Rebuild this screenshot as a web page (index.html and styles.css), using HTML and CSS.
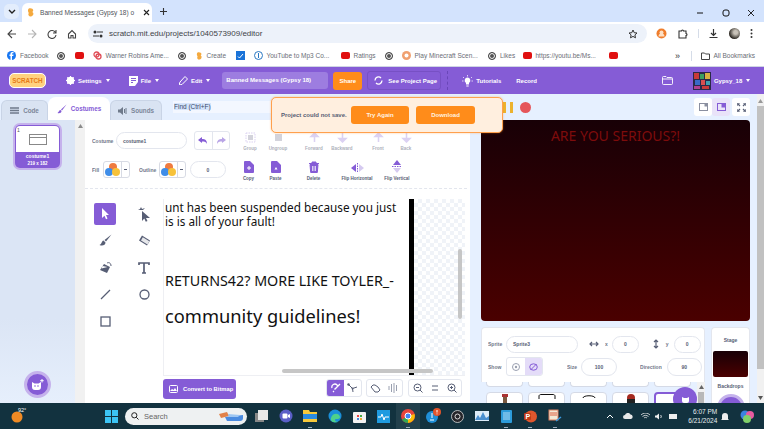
FILE: index.html
```html
<!DOCTYPE html>
<html lang="en">
<head>
<meta charset="utf-8">
<title>Banned Messages (Gypsy 18) on Scratch</title>
<link rel="stylesheet" href="styles.css">
</head>
<body>
<div class="tabstrip">
  <div class="tab-list"><svg width="8" height="6" viewBox="0 0 8 6"><path d="M1 1l3 3 3-3" fill="none" stroke="#222" stroke-width="1.400"/></svg></div>
  <div class="tab">
    <svg class="favicon" width="8" height="11" viewBox="0 0 9 11"><path d="M2 1c2-1 5 0 5 2 0 1-1 2-1 2s2 1 1 3c-1 2-4 3-5 1-1-1 0-3 0-3S0 3 2 1z" fill="#f4a93e"/></svg>
    <span class="tab-title">Banned Messages (Gypsy 18) o</span>
    <svg class="tab-close" width="7" height="7" viewBox="0 0 7 7"><path d="M1 1l5 5M6 1L1 6" stroke="#222" stroke-width="1.100"/></svg>
  </div>
  <svg class="new-tab" width="9" height="9" viewBox="0 0 9 9"><path d="M4.500 1v7M1 4.500h7" stroke="#333" stroke-width="1.100"/></svg>
  <div class="win-controls">
    <svg width="8" height="8" viewBox="0 0 8 8"><path d="M1 4h6" stroke="#111" stroke-width="1"/></svg>
    <svg width="8" height="8" viewBox="0 0 8 8"><rect x="1" y="1" width="6" height="6" rx="2" fill="none" stroke="#111"/></svg>
    <svg width="8" height="8" viewBox="0 0 8 8"><path d="M1 1l6 6M7 1l-6 6" stroke="#111" stroke-width=".9"/></svg>
  </div>
</div>

<div class="toolbar">
  <div class="nav-icons">
    <svg width="10" height="10" viewBox="0 0 10 10"><path d="M9 5H1.500M5 1L1 5l4 4" fill="none" stroke="#444" stroke-width="1.100"/></svg>
    <svg width="10" height="10" viewBox="0 0 10 10"><path d="M1 5h7.500M5 1l4 4-4 4" fill="none" stroke="#b5b5b5" stroke-width="1.100"/></svg>
    <svg width="10" height="10" viewBox="0 0 10 10"><path d="M8.500 3.500A4 4 0 1 0 9 6M9 1v3H6" fill="none" stroke="#444" stroke-width="1.100"/></svg>
    <svg width="10" height="10" viewBox="0 0 10 10"><path d="M1.500 5L5 1.500 8.500 5v4H6V6.500H4V9H1.500z" fill="none" stroke="#444" stroke-width="1.100"/></svg>
  </div>
  <div class="omnibox">
    <svg class="site-info" width="10" height="8" viewBox="0 0 10 8"><path d="M4 2h6M0 6h6" stroke="#333" stroke-width="1.200"/><circle cx="2" cy="2" r="1.500" fill="#333"/><circle cx="8" cy="6" r="1.500" fill="#333"/></svg>
    <span class="url">scratch.mit.edu/projects/1040573909/editor</span>
    <svg class="star" width="10" height="10" viewBox="0 0 10 10"><path d="M5 1l1.200 2.700 2.800.3-2.100 1.900.6 2.900L5 7.400 2.500 8.800l.6-2.900L1 4l2.800-.3z" fill="none" stroke="#333" stroke-width="1"/></svg>
  </div>
  <div class="ext-icons">
    <svg width="11" height="11" viewBox="0 0 11 11"><circle cx="5.500" cy="5.500" r="5" fill="#ef7d2c"/><circle cx="5.500" cy="4.500" r="2" fill="#fde0c5"/><path d="M2.500 8.500a3 3 0 0 1 6 0z" fill="#fde0c5"/></svg>
    <svg width="11" height="11" viewBox="0 0 11 11"><path d="M2 3h2.500a1 1 0 0 1 2 0H9v2.500a1 1 0 0 1 0 2V10H2z" fill="none" stroke="#333" stroke-width="1.100"/></svg>
    <i class="sep"></i>
    <svg width="11" height="11" viewBox="0 0 11 11"><path d="M5.500 1v6M3 5l2.500 2.500L8 5M1.500 9.500h8" fill="none" stroke="#333" stroke-width="1.200"/></svg>
    <span class="profile"></span>
    <svg width="3" height="11" viewBox="0 0 3 11"><circle cx="1.500" cy="2" r="1" fill="#333"/><circle cx="1.500" cy="5.500" r="1" fill="#333"/><circle cx="1.500" cy="9" r="1" fill="#333"/></svg>
  </div>
</div>

<div class="bookmarks">
  <span class="bm"><svg width="9" height="9" viewBox="0 0 9 9"><circle cx="4.500" cy="4.500" r="4.500" fill="#1877f2"/><path d="M5 9V5h1.300l.2-1.400H5V3c0-.5.200-.7.700-.7h.8V1H5.300C4 1 3.500 1.800 3.500 2.800v.8H2.500V5h1v4z" fill="#fff"/></svg>Facebook</span>
  <span class="bm"><span class="globe"></span></span>
  <span class="bm"><span class="yt"></span></span>
  <span class="bm"><svg width="9" height="9" viewBox="0 0 9 9"><circle cx="3.500" cy="3.500" r="2.500" fill="none" stroke="#e0505a" stroke-width="1.300"/><circle cx="5.500" cy="5.500" r="2.500" fill="none" stroke="#e0505a" stroke-width="1.300"/></svg>Warner Robins Ame...</span>
  <span class="bm"><span class="globe"></span></span>
  <span class="bm"><svg width="7" height="10" viewBox="0 0 9 11"><path d="M2 1c2-1 5 0 5 2 0 1-1 2-1 2s2 1 1 3c-1 2-4 3-5 1-1-1 0-3 0-3S0 3 2 1z" fill="#f4a93e"/></svg>Create</span>
  <span class="bm"><svg width="9" height="9" viewBox="0 0 9 9"><rect width="9" height="9" fill="#1a73d8"/><path d="M2 5.500l1.500 1.500L7 3" fill="none" stroke="#fff"/></svg></span>
  <span class="bm"><svg width="9" height="9" viewBox="0 0 9 9"><circle cx="4.500" cy="4.500" r="4" fill="none" stroke="#2b78c2"/><path d="M4.500 2v5" stroke="#2b78c2"/></svg>YouTube to Mp3 Co...</span>
  <span class="bm"><span class="yt"></span>Ratings</span>
  <span class="bm"><span class="globe"></span></span>
  <span class="bm"><svg width="9" height="9" viewBox="0 0 9 9"><circle cx="4.500" cy="4.500" r="4.500" fill="#f0a070"/><circle cx="4.500" cy="4.500" r="2" fill="#fff"/></svg>Play Minecraft Scen...</span>
  <span class="bm"><span class="globe"></span>Likes</span>
  <span class="bm"><span class="yt"></span>https://youtu.be/Ms...</span>
  <span class="bm"><span class="yt"></span></span>
  <span class="bm more">»</span>
  <i class="sep"></i>
  <span class="bm"><svg width="9" height="8" viewBox="0 0 9 8"><path d="M.5 1h3l1 1h4v5.500h-8z" fill="none" stroke="#444"/></svg>All Bookmarks</span>
</div>

<header class="menubar">
  <div class="logo">SCRATCH</div>
  <div class="menu m-settings">
    <svg width="9" height="9" viewBox="0 0 9 9"><circle cx="4.500" cy="4.500" r="2.800" fill="none" stroke="#fff" stroke-width="2"/><path d="M4.500 0v9M0 4.500h9M1.300 1.300l6.400 6.400M7.700 1.300L1.300 7.700" stroke="#fff" stroke-width="1.100"/></svg>
    <span>Settings</span><i class="caret"></i>
  </div>
  <div class="menu m-file">
    <svg width="9" height="10" viewBox="0 0 9 10"><path d="M0 0h9v6L6 10H0z" fill="#fff"/><path d="M2 2.500h5M2 4.500h5M2 6.500h2" stroke="#855cd6"/></svg>
    <span>File</span><i class="caret"></i>
  </div>
  <div class="menu m-edit">
    <svg width="9" height="9" viewBox="0 0 9 9"><path d="M0 9l1-3 5-5.500 2.500 2.500L3 8.500z" fill="none" stroke="#fff"/></svg>
    <span>Edit</span><i class="caret"></i>
  </div>
  <div class="project-title">Banned Messages (Gypsy 18)</div>
  <div class="share">Share</div>
  <div class="see-page">
    <svg width="9" height="9" viewBox="0 0 9 9"><path d="M1 4.500a3.500 3.500 0 0 1 6-2.500M8 4.500a3.500 3.500 0 0 1-6 2.500" fill="none" stroke="#fff" stroke-width="1.300"/></svg>
    <span>See Project Page</span>
  </div>
  <i class="menu-div"></i>
  <div class="menu m-tut">
    <svg width="11" height="12" viewBox="0 0 11 12"><path d="M5.500 2.500a3 3 0 0 0-1.500 5.500v1.500h3V8a3 3 0 0 0-1.500-5.500z" fill="#fff"/><path d="M5.500 0v1.500M1 2l1 1M10 2L9 3M0 6h1.500M9.500 6H11" stroke="#fff" stroke-width=".7"/><path d="M4.300 11h2.400" stroke="#fff"/></svg>
    <span>Tutorials</span>
  </div>
  <div class="menu m-rec"><span>Record</span></div>
  <svg class="m-folder" width="11" height="9" viewBox="0 0 11 9"><path d="M.5 1.500a1 1 0 0 1 1-1h2.500l1 1h4.500a1 1 0 0 1 1 1v5a1 1 0 0 1-1 1h-8a1 1 0 0 1-1-1z M.5 3h10" fill="none" stroke="#fff" stroke-width=".9"/></svg>
  <div class="user">
    <svg class="avatar" width="18" height="18" viewBox="0 0 18 18"><rect width="18" height="18" fill="#2a2a48"/><rect x="1" y="1" width="5" height="6" fill="#c83a3a"/><rect x="7" y="2" width="4" height="5" fill="#3aa060"/><rect x="12" y="1" width="5" height="6" fill="#d8b040"/><rect x="2" y="8" width="5" height="5" fill="#3a6ac8"/><rect x="8" y="8" width="4" height="5" fill="#d85050"/><rect x="13" y="9" width="4" height="4" fill="#40a0b0"/><rect x="1" y="14" width="6" height="3" fill="#b04090"/><rect x="9" y="14" width="7" height="3" fill="#c83a3a"/></svg>
    <span>Gypsy_18</span><i class="caret"></i>
  </div>
</header>

<main class="workspace">
  <section class="left-pane">
    <div class="tab-row">
      <div class="etab e-code"><svg width="9" height="7" viewBox="0 0 9 7"><path d="M0 1h9M0 3.500h9M0 6h9" stroke="#6f7a8a" stroke-width="1.300"/></svg>Code</div>
      <div class="etab e-costumes"><svg width="10" height="10" viewBox="0 0 10 10"><path d="M9.500 .5L4 5.500l1 1zM3.500 6C2 6 2 8 .5 9c2 .5 4 0 4-2z" fill="#855cd6"/></svg>Costumes</div>
      <div class="etab e-sounds"><svg width="9" height="8" viewBox="0 0 9 8"><path d="M0 2.500h2L5 0v8L2 5.500H0z" fill="#6f7a8a"/><path d="M6.500 2v4M8 1v6" stroke="#6f7a8a"/></svg>Sounds</div>
      <div class="find"><span>Find (Ctrl+F)</span></div>
    </div>
    <div class="editor-row">
      <aside class="selector">
        <div class="thumb-wrap">
          <div class="thumb">
            <div class="thumb-img"><span class="thumb-idx">1</span><span class="thumb-pic"></span></div>
            <div class="thumb-label"><b>costume1</b><small>219 x 182</small></div>
          </div>
        </div>
        <div class="add-costume">
          <svg width="13" height="12" viewBox="0 0 13 12"><path d="M1 3l2.500 1.500h4L10 3v5a3 3 0 0 1-3 3H4a3 3 0 0 1-3-3z" fill="#fff"/><circle cx="4" cy="7" r=".8" fill="#855cd6"/><circle cx="7" cy="7" r=".8" fill="#855cd6"/><path d="M11 0v3.500M9.200 1.700h3.500" stroke="#fff"/></svg>
        </div>
      </aside>
      <div class="sel-scroll"><svg width="5" height="4" viewBox="0 0 5 4"><path d="M2.500 0L5 4H0z" fill="#8a8a8a"/></svg></div>
      <div class="paint">
        <div class="p-row1">
          <span class="lbl l-costume">Costume</span>
          <span class="pill p-name">costume1</span>
          <span class="undo">
            <span><svg width="10" height="7" viewBox="0 0 10 7"><path d="M0 3l4-3v2c3 0 5 1 5 5-1-2-2-2.500-5-2.500V6z" fill="#855cd6"/></svg></span>
            <span><svg width="10" height="7" viewBox="0 0 10 7"><path d="M10 3L6 0v2C3 2 1 3 1 7c1-2 2-2.500 5-2.500V6z" fill="#b9a5e6"/></svg></span>
          </span>
          <div class="ops ops1">
            <span class="op"><svg width="11" height="11" viewBox="0 0 11 11"><rect x="1" y="1" width="9" height="9" fill="none" stroke="#b9a5e6" stroke-dasharray="1.500 1"/><rect x="3" y="3" width="5" height="5" fill="#a9a9b9"/></svg><em>Group</em></span>
            <span class="op"><svg width="11" height="11" viewBox="0 0 11 11"><rect x="2" y="2" width="7" height="7" fill="#a9a9b9"/></svg><em>Ungroup</em></span>
            <span class="op"><svg width="11" height="11" viewBox="0 0 11 11"><path d="M5.500 1v9M2 4.500L5.500 1 9 4.500z" fill="#b9a5e6" stroke="#b9a5e6" stroke-width="1.500"/></svg><em>Forward</em></span>
            <span class="op"><svg width="11" height="11" viewBox="0 0 11 11"><path d="M5.500 10V1M2 6.500L5.500 10 9 6.500z" fill="#b9a5e6" stroke="#b9a5e6" stroke-width="1.500"/></svg><em>Backward</em></span>
            <span class="op"><svg width="11" height="11" viewBox="0 0 11 11"><path d="M5.500 1v9M2 4.500L5.500 1 9 4.500z" fill="#b9a5e6" stroke="#b9a5e6" stroke-width="1.500"/></svg><em>Front</em></span>
            <span class="op"><svg width="11" height="11" viewBox="0 0 11 11"><path d="M5.500 10V1M2 6.500L5.500 10 9 6.500z" fill="#b9a5e6" stroke="#b9a5e6" stroke-width="1.500"/></svg><em>Back</em></span>
          </div>
        </div>
        <div class="p-row2">
          <span class="lbl l-fill">Fill</span>
          <span class="swatch"><span class="dots"><i></i><i></i><i></i></span><b></b></span>
          <span class="lbl l-outline">Outline</span>
          <span class="swatch"><span class="dots"><i></i><i></i><i></i></span><b></b></span>
          <span class="pill p-num">0</span>
          <div class="ops ops2">
            <span class="op"><svg width="10" height="12" viewBox="0 0 10 12"><path d="M0 1a1 1 0 0 1 1-1h5l4 4v7a1 1 0 0 1-1 1H1a1 1 0 0 1-1-1z" fill="#855cd6"/><path d="M3 7h4M5 5v4" stroke="#fff"/></svg><em>Copy</em></span>
            <span class="op"><svg width="10" height="12" viewBox="0 0 10 12"><path d="M0 1a1 1 0 0 1 1-1h5l4 4v7a1 1 0 0 1-1 1H1a1 1 0 0 1-1-1z" fill="#855cd6"/><path d="M3.500 8.500h3L5 6z" fill="#fff"/></svg><em>Paste</em></span>
            <span class="op"><svg width="10" height="12" viewBox="0 0 10 12"><path d="M0 2.500h10M3 2.500V1h4v1.500M1 3.500h8l-.7 8H1.700z" fill="#855cd6" stroke="#855cd6"/><path d="M3.500 5v5M5 5v5M6.500 5v5" stroke="#fff" stroke-width=".7"/></svg><em>Delete</em></span>
            <span class="op"><svg width="13" height="10" viewBox="0 0 13 10"><path d="M5 1v8L0 5z" fill="#855cd6"/><path d="M8 1v8l5-4z" fill="#d5caf0"/><path d="M6.500 0v10" stroke="#855cd6" stroke-dasharray="1.500 1"/></svg><em>Flip Horizontal</em></span>
            <span class="op"><svg width="10" height="13" viewBox="0 0 10 13"><path d="M1 5h8L5 0z" fill="#855cd6"/><path d="M1 8h8l-4 5z" fill="#d5caf0"/><path d="M0 6.500h10" stroke="#855cd6" stroke-dasharray="1.500 1"/></svg><em>Flip Vertical</em></span>
          </div>
        </div>
        <div class="p-body">
          <div class="tools">
            <span class="tool on"><svg width="9" height="13" viewBox="0 0 9 13"><path d="M1 1l7 7H5l1.500 3.500-1.500.7L3.500 8.700 1 11z" fill="#fff"/></svg></span>
            <span class="tool"><svg width="14" height="16" viewBox="0 0 14 16"><path d="M5 5l8 7H9l1.500 3-1.700.7L7.300 12.500 5 15z" fill="#575e75"/><path d="M3 3l1-2 1 2 3-1-2 2H1z" fill="#575e75"/></svg></span>
            <span class="tool"><svg width="13" height="13" viewBox="0 0 13 13"><path d="M12.500.5L5.500 6l1.500 1.500z" fill="#575e75"/><path d="M4.500 6.500C2.500 7 3 10 .5 11c3 1.500 6 0 6-2.500z" fill="#575e75"/></svg></span>
            <span class="tool"><svg width="13" height="11" viewBox="0 0 13 11"><path d="M4 .5l8 5-3 5-8-5z" fill="#575e75"/><path d="M3 5.500l6.500 4 1.800-3.200-6.500-4z" fill="#fff" opacity=".85"/></svg></span>
            <span class="tool"><svg width="13" height="12" viewBox="0 0 13 12"><path d="M5 2l6 3-3 6-7-3z" fill="#575e75"/><path d="M2.500 6.500l1-2.500 5 1z" fill="#fff"/><path d="M8 1c2-1 4 0 4 3" fill="none" stroke="#575e75"/></svg></span>
            <span class="tool"><svg width="12" height="12" viewBox="0 0 12 12"><path d="M1 3V1h10v2M6 1v10M4 11h4" fill="none" stroke="#575e75" stroke-width="1.700"/></svg></span>
            <span class="tool"><svg width="11" height="11" viewBox="0 0 11 11"><path d="M1 10L10 1" stroke="#575e75" stroke-width="1.300"/></svg></span>
            <span class="tool"><svg width="11" height="11" viewBox="0 0 11 11"><circle cx="5.500" cy="5.500" r="4.500" fill="none" stroke="#575e75" stroke-width="1.300"/></svg></span>
            <span class="tool"><svg width="11" height="11" viewBox="0 0 11 11"><rect x="1" y="1" width="9" height="9" fill="none" stroke="#575e75" stroke-width="1.300"/></svg></span>
          </div>
          <div class="canvas-col">
            <div class="canvas">
              <p class="t t1">unt has been suspended because you just</p>
              <p class="t t2">is is all of your fault!</p>
              <p class="t t3">RETURNS42? MORE LIKE TOYLER_-</p>
              <p class="t t4">community guidelines!</p>
              <i class="bar"></i>
              <i class="checker"></i>
              <i class="scroll-h"></i>
              <i class="scroll-v"></i>
            </div>
            <div class="canvas-foot">
              <span class="convert"><svg width="9" height="8" viewBox="0 0 9 8"><rect x=".5" y=".5" width="8" height="7" rx="1" fill="none" stroke="#fff"/><path d="M1 6l2-2 1.500 1L6 3l2 3z" fill="#fff"/></svg>Convert to Bitmap</span>
              <span class="foot-group fg-mag">
                <span class="fb on"><svg width="10" height="10" viewBox="0 0 10 10"><path d="M1 5a3 3 0 0 1 5-3l1 1-3 3-.5-.5M3 8l-1 1M9 1L7 3" fill="none" stroke="#fff" stroke-width="1.300"/></svg></span>
                <span class="fb"><svg width="11" height="10" viewBox="0 0 11 10"><path d="M1.500 1.500L5.500 5.500 10 4M5.500 5.500L6 9" fill="none" stroke="#575e75"/><circle cx="1.500" cy="1.500" r="1.200" fill="#575e75"/><circle cx="5.500" cy="5.500" r="1" fill="#575e75"/></svg></span>
              </span>
              <span class="foot-group fg-hand">
                <span class="fb"><svg width="11" height="10" viewBox="0 0 11 10"><path d="M1 4l2-2 2 0 3 2 2 3-2 2H5z" fill="none" stroke="#575e75"/></svg></span>
                <span class="fb"><svg width="10" height="10" viewBox="0 0 10 10"><path d="M1 3v4M3.500 1v8M6 0v10M8.500 2v6" stroke="#9aa0b0"/></svg></span>
              </span>
              <span class="foot-group fg-zoom">
                <span class="fb"><svg width="10" height="10" viewBox="0 0 10 10"><circle cx="4.500" cy="4.500" r="3.500" fill="none" stroke="#575e75"/><path d="M7 7l2.500 2.500M3 4.500h3" stroke="#575e75"/></svg></span>
                <span class="fb"><svg width="8" height="6" viewBox="0 0 8 6"><path d="M1 1h6M1 5h6" stroke="#575e75"/></svg></span>
                <span class="fb"><svg width="10" height="10" viewBox="0 0 10 10"><circle cx="4.500" cy="4.500" r="3.500" fill="none" stroke="#575e75"/><path d="M7 7l2.500 2.500M3 4.500h3M4.500 3v3" stroke="#575e75"/></svg></span>
              </span>
            </div>
          </div>
        </div>
      </div>
    </div>
  </section>

  <section class="right-pane">
    <div class="stage-head">
      <div class="run-ctl"><i class="pause"></i><i class="pause"></i><i class="stop"></i></div>
      <div class="layout-btns">
        <span class="lb"><svg width="9" height="8" viewBox="0 0 9 8"><rect x=".5" y=".5" width="8" height="7" fill="none" stroke="#8a8fa0"/><rect x="5.500" y=".5" width="3" height="3" fill="#8a8fa0"/></svg></span>
        <span class="lb sel"><svg width="9" height="8" viewBox="0 0 9 8"><rect x=".5" y=".5" width="8" height="7" fill="none" stroke="#855cd6"/><rect x="4.500" y=".5" width="4" height="4" fill="#855cd6"/></svg></span>
        <span class="lb full"><svg width="9" height="9" viewBox="0 0 9 9"><path d="M0 3V0h3M6 0h3v3M9 6v3H6M3 9H0V6M1 1l2 2M8 1L6 3M8 8L6 6M1 8l2-2" fill="none" stroke="#575e75" stroke-width="1.200"/></svg></span>
      </div>
    </div>
    <div class="stage"><h1>ARE YOU SERIOUS?!</h1></div>
    <div class="lower">
      <div class="sprite-col">
        <div class="sprite-info">
          <div class="si-row">
            <span class="lbl si-l1">Sprite</span><span class="pill si-name">Sprite3</span>
            <svg class="si-arrow" width="10" height="6" viewBox="0 0 10 6"><path d="M1 3h8M3 1L1 3l2 2M7 1l2 2-2 2" fill="none" stroke="#575e75" stroke-width="1.200"/></svg>
            <span class="lbl si-x">x</span><span class="pill si-n1">0</span>
            <svg class="si-arrow2" width="6" height="10" viewBox="0 0 6 10"><path d="M3 1v8M1 3l2-2 2 2M1 7l2 2 2-2" fill="none" stroke="#575e75" stroke-width="1.200"/></svg>
            <span class="lbl si-y">y</span><span class="pill si-n2">0</span>
          </div>
          <div class="si-row si-second">
            <span class="lbl si-l1">Show</span>
            <span class="show-btns">
              <span><svg width="8" height="8" viewBox="0 0 8 8"><circle cx="4" cy="4" r="3.500" fill="none" stroke="#9aa0b0"/><circle cx="4" cy="4" r="1.200" fill="#9aa0b0"/></svg></span>
              <span class="sel"><svg width="9" height="8" viewBox="0 0 9 8"><ellipse cx="4.500" cy="4" rx="3.800" ry="3.200" fill="none" stroke="#855cd6"/><path d="M1.500 7l6-6" stroke="#855cd6"/></svg></span>
            </span>
            <span class="lbl si-size">Size</span><span class="pill si-n3">100</span>
            <span class="lbl si-dir">Direction</span><span class="pill si-n4">90</span>
          </div>
        </div>
        <div class="sprite-list">
          <div class="cards cards-top"><i></i><i></i><i></i><i></i><i></i></div>
          <div class="cards cards-main">
            <i><svg width="8" height="9" viewBox="0 0 8 9"><rect x="1" y="0" width="6" height="3" fill="#a33"/><rect x="2" y="3" width="4" height="6" fill="#7a5a40"/></svg></i>
            <i><svg width="18" height="5" viewBox="0 0 18 5"><path d="M1 5V2C1 1 2 .5 3 .5h12c1 0 2 .5 2 1.500v3" fill="none" stroke="#111"/></svg></i>
            <i><svg width="14" height="4" viewBox="0 0 14 4"><path d="M1 4C1 1 13 1 13 4" fill="none" stroke="#111"/></svg></i>
            <i><svg width="10" height="9" viewBox="0 0 10 9"><circle cx="5" cy="4" r="4" fill="#a52a20"/><rect x="1" y="5" width="8" height="4" fill="#222"/></svg></i>
            <i class="active"></i>
          </div>
          <div class="list-scroll"><svg width="5" height="4" viewBox="0 0 5 4"><path d="M2.500 0L5 4H0z" fill="#666"/></svg><b></b></div>
          <div class="add-sprite"><svg width="9" height="9" viewBox="0 0 9 9"><path d="M1 2l2 1h3l2-1v4a2 2 0 0 1-2 2H3a2 2 0 0 1-2-2z" fill="#fff"/></svg></div>
        </div>
      </div>
      <aside class="stage-panel">
        <div class="sp-title">Stage</div>
        <div class="sp-thumb"></div>
        <div class="sp-label">Backdrops</div>
        <div class="sp-add"><svg width="10" height="7" viewBox="0 0 10 7"><rect width="10" height="7" rx="1" fill="#fff"/></svg></div>
      </aside>
    </div>
  </section>

  <div class="page-scroll"><svg width="5" height="4" viewBox="0 0 5 4"><path d="M2.500 0L5 4H0z" fill="#999"/></svg><b></b><svg class="dn" width="5" height="4" viewBox="0 0 5 4"><path d="M2.500 4L5 0H0z" fill="#555"/></svg></div>

  <div class="alert">
    <span class="alert-msg">Project could not save.</span>
    <span class="alert-btn a1">Try Again</span>
    <span class="alert-btn a2">Download</span>
  </div>
</main>

<footer class="taskbar">
  <div class="weather"><svg width="14" height="14" viewBox="0 0 14 14"><circle cx="6" cy="8" r="5.500" fill="#ef8a24"/></svg><span>92°</span></div>
  <svg class="winlogo" width="13" height="13" viewBox="0 0 13 13"><path d="M0 0h6v6H0zM7 0h6v6H7zM0 7h6v6H0zM7 7h6v6H7z" fill="#3cc4f5"/></svg>
  <div class="search">
    <svg width="8" height="8" viewBox="0 0 8 8"><circle cx="3.300" cy="3.300" r="2.600" fill="none" stroke="#222"/><path d="M5.300 5.300L7.500 7.500" stroke="#222"/></svg>
    <span>Search</span>
    <svg class="search-art" width="26" height="11" viewBox="0 0 26 11"><path d="M1 3l8-2 2 4-8 2z" fill="#e2824a"/><path d="M7 6l18-2v3a3 3 0 0 1-3 3H9z" fill="#4a8be0"/><path d="M10 3l12 1-2 2-9 0z" fill="#9dc6f2"/></svg>
  </div>
  <div class="apps">
    <span class="app"><svg width="13" height="13" viewBox="0 0 13 13"><rect y="3" width="9" height="9" fill="#888"/><rect x="3" width="10" height="10" fill="#e8e8e8"/></svg></span>
    <span class="app"><svg width="14" height="14" viewBox="0 0 14 14"><circle cx="7" cy="7" r="6.500" fill="#5b5fc7"/><rect x="3.500" y="4.500" width="5" height="5" rx="1" fill="#fff"/><path d="M9 6l2-1v4L9 8z" fill="#fff"/></svg></span>
    <span class="app dot"><svg width="14" height="12" viewBox="0 0 14 12"><path d="M0 0h6l1 2h7v10H0z" fill="#f8c93a"/><rect y="4" width="14" height="5" fill="#2b8be0"/></svg></span>
    <span class="app"><svg width="14" height="14" viewBox="0 0 14 14"><circle cx="7" cy="7" r="6.500" fill="#1a8fd8"/><path d="M3 9c1-5 8-6 9-1 0 2-2 2-4 2C6 10 7 13 10 13 6 14 2 13 3 9z" fill="#4ed18b"/></svg></span>
    <span class="app"><svg width="13" height="13" viewBox="0 0 13 13"><rect y="2" width="13" height="11" rx="1" fill="#f3f3f3"/><rect x="4" y="5" width="2" height="2" fill="#e44"/><rect x="7" y="5" width="2" height="2" fill="#4a4"/><rect x="4" y="8" width="2" height="2" fill="#48d"/><rect x="7" y="8" width="2" height="2" fill="#ea3"/></svg></span>
    <span class="app"><svg width="13" height="13" viewBox="0 0 13 13"><rect width="13" height="13" fill="#1e9be0"/><path d="M1 7h3l1-3 2 6 1-3h4" fill="none" stroke="#fff"/></svg></span>
    <span class="app cur"><svg width="14" height="14" viewBox="0 0 14 14"><circle cx="7" cy="7" r="7" fill="#e8453c"/><path d="M7 7L1 10.500A7 7 0 0 0 7 14z" fill="#34a853"/><path d="M7 7l6.500-2A7 7 0 0 1 7 14z" fill="#fbbc05"/><circle cx="7" cy="7" r="3" fill="#4285f4" stroke="#fff"/></svg></span>
    <span class="app"><svg width="16" height="16" viewBox="0 0 16 16"><circle cx="7" cy="9" r="6" fill="#1f8fd8"/><path d="M7 5v5M5 12h4" stroke="#fff"/><circle cx="12" cy="4" r="4" fill="#e2542a"/><path d="M12 2v2.500M12 5.500v.8" stroke="#fff"/></svg></span>
    <span class="app"><svg width="13" height="13" viewBox="0 0 13 13"><circle cx="6.500" cy="6.500" r="6" fill="#25252a" stroke="#ddd" stroke-width=".8"/><circle cx="6.500" cy="6.500" r="2.500" fill="none" stroke="#ddd"/></svg></span>
    <span class="app"><svg width="14" height="10" viewBox="0 0 14 10"><rect width="14" height="10" fill="#dcecf8"/><path d="M0 9l3-5 2 3 3-6 3 6 3-2v4z" fill="#4a90d0"/></svg></span>
    <span class="app dot"><svg width="11" height="13" viewBox="0 0 11 13"><rect width="11" height="13" rx="1" fill="#2d9cdb"/><path d="M2 3h7M2 5h7M2 7h7M2 9h7" stroke="#e9f6ff" stroke-width=".7"/></svg></span>
    <span class="app dot"><svg width="13" height="13" viewBox="0 0 13 13"><circle cx="7" cy="6.500" r="6" fill="#e0562d"/><rect y="3" width="7" height="7" rx="1" fill="#c13b16"/><text class="app-p" x="1.500" y="9">P</text></svg></span>
    <span class="app dot"><svg width="14" height="14" viewBox="0 0 14 14"><rect x="1" y="1" width="9" height="10" fill="#f2ead8" stroke="#e08060"/><path d="M2 4h7M2 6h7" stroke="#e06040"/><path d="M8 12l5-4" stroke="#3a9be0" stroke-width="1.500"/></svg></span>
  </div>
  <div class="tray">
    <svg width="8" height="5" viewBox="0 0 8 5"><path d="M1 4l3-3 3 3" fill="none" stroke="#fff"/></svg>
    <svg width="10" height="6" viewBox="0 0 10 6"><path d="M2 6a2 2 0 0 1 0-4 3 3 0 0 1 5.500-.5A2.300 2.300 0 0 1 8 6z" fill="#e8e8e8"/></svg>
    <svg width="9" height="7" viewBox="0 0 9 7"><path d="M0 2c2.500-2.500 6.500-2.500 9 0M1.500 3.500c2-1.500 4-1.500 6 0M3 5c1-.8 2-.8 3 0" fill="none" stroke="#eee" stroke-width=".8"/></svg>
    <svg width="8" height="7" viewBox="0 0 8 7"><path d="M0 2.500h1.500L4 .5v6L1.500 4.500H0z" fill="#eee"/><path d="M5.500 2c1 1 1 2 0 3" stroke="#eee" fill="none"/></svg>
    <svg width="10" height="7" viewBox="0 0 10 7"><rect x="1" y="1" width="8" height="5" fill="#eee"/></svg>
    <div class="clock"><span>6:07 PM</span><span>6/21/2024</span></div>
    <svg width="8" height="9" viewBox="0 0 8 9"><path d="M1 7V4a3 3 0 0 1 6 0v3l1 1H0zM3 8.500h2" fill="#eee"/></svg>
    <svg width="14" height="13" viewBox="0 0 14 13"><circle cx="5" cy="5" r="4.500" fill="#3b82e0"/><circle cx="10" cy="5" r="4" fill="#e85ba0"/><circle cx="7" cy="9" r="4" fill="#7fd06a"/></svg>
  </div>
</footer>
</body>
</html>
```
FILE: styles.css
```css
* { box-sizing: border-box; }
html, body { margin: 0; height: 100%; overflow: hidden; }
body {
  width: 764px;
  height: 429px;
  display: flex;
  flex-direction: column;
  font-family: "Liberation Sans", Arial, sans-serif;
  color: #575e75;
}
p, h1 { margin: 0; font-weight: normal; }
i, em { font-style: normal; display: block; }
svg { display: block; flex: none; }

/* browser chrome */
.tabstrip { height: 22px; flex: none; background: #d3e3fd; display: flex; align-items: flex-end; position: relative; }
.tab-list { width: 15px; height: 15px; margin: 0 0 3px 4px; background: #e3edfc; border-radius: 5px; display: flex; align-items: center; justify-content: center; }
.tab { width: 130px; height: 19px; margin-left: 3px; background: #fff; border-radius: 6px 6px 0 0; display: flex; align-items: center; padding-left: 5px; gap: 5px; }
.tab-title { font-size: 6.600px; color: #50545a; width: 95px; white-space: nowrap; }
.tab-close { margin-left: 3px; }
.new-tab { margin: 0 0 6px 7px; }
.win-controls { margin-left: auto; margin-right: 9px; width: 59px; height: 18px; display: flex; align-items: center; justify-content: space-between; }

.toolbar { height: 23px; flex: none; background: #fff; display: flex; align-items: center; }
.nav-icons { width: 88px; padding: 0 11px 0 7px; display: flex; justify-content: space-between; }
.omnibox { width: 559px; height: 19px; background: #edf2fa; border-radius: 10px; display: flex; align-items: center; padding: 0 9px 0 5px; }
.site-info { margin-right: 6px; }
.url { font-size: 8px; color: #3f4348; }
.star { margin-left: auto; }
.ext-icons { flex: 1; display: flex; align-items: center; justify-content: space-between; padding: 0 11px 0 9px; }
.sep { width: 1px; height: 9px; background: #d5dce8; }
.profile { width: 11px; height: 11px; border-radius: 50%; background: radial-gradient(circle at 60% 40%, #c8c2b8 20%, #2a2620 70%); }

.bookmarks {
  height: 22px; flex: none; background: #fff;
  display: grid;
  grid-template-columns: 49px 18.500px 18px 84.500px 18.500px 40px 18px 87px 43.500px 17.500px 85.500px 35.500px 86px 66.500px 16px 9.500px 1fr;
  padding-left: 7px;
  align-items: center;
  border-bottom: 1px solid #cfd5e4;
}
.bookmarks .sep { height: 10px; }
.bm { display: flex; align-items: center; gap: 4px; font-size: 6.500px; color: #6a6e76; white-space: nowrap; }
.bm.more { font-size: 9px; color: #333; }
.globe { width: 8px; height: 8px; border-radius: 50%; background: #555; border: 1.500px solid #444; box-shadow: inset 0 0 0 1px #fff; margin-left: 1px; }
.yt { width: 9px; height: 7px; border-radius: 2px; background: #e01010; }

/* scratch menu bar */
.menubar { height: 27px; flex: none; background: #855cd6; display: flex; align-items: center; color: #fff; font-weight: bold; font-size: 6px; }
.menubar > * { flex: none; }
.logo { width: 37px; height: 15px; margin-left: 9px; background: #ffd27f; border: 1px solid #fff; border-radius: 5px; font-size: 6.300px; color: #e67a18; text-align: center; line-height: 13px; overflow: hidden; }
.menu { display: flex; align-items: center; gap: 3px; }
.caret { width: 0; height: 0; border: 2.500px solid transparent; border-top: 3px solid #fff; border-bottom: 0; margin-left: 1px; }
.m-settings { margin-left: 20px; }
.m-file { margin-left: 19px; }
.m-edit { margin-left: 20px; }
.project-title { width: 106px; height: 17px; margin-left: 12px; background: #9d7de0; border-radius: 3px; padding-left: 4px; line-height: 17px; white-space: nowrap; }
.share { width: 29px; height: 18px; margin-left: 5px; background: #ff8c1a; border-radius: 3px; text-align: center; line-height: 18px; }
.see-page { width: 74px; height: 19px; margin-left: 5px; border: 1px solid #7750c4; border-radius: 3px; display: flex; align-items: center; gap: 5px; padding-left: 6px; white-space: nowrap; }
.menu-div { width: 0; height: 19px; margin-left: 6px; border-left: 1px dashed #6a46b8; }
.m-tut { margin-left: 14px; }
.m-rec { margin-left: 15px; }
.m-folder { margin-left: 125px; }
.user { display: flex; align-items: center; gap: 3px; margin-left: 20px; }

/* workspace */
.workspace { height: 309px; flex: none; display: flex; background: #e6f0ff; position: relative; overflow: hidden; }
.left-pane { width: 474px; flex: none; display: flex; flex-direction: column; }
.tab-row { height: 26px; flex: none; display: flex; align-items: flex-end; padding-left: 1px; font-size: 6.300px; font-weight: bold; }
.etab { height: 20px; display: flex; align-items: center; justify-content: center; gap: 4px; background: #d9e3f2; color: #7c8698; border-radius: 6px 6px 0 0; border: 1px solid #c9d4e6; border-bottom: 0; }
.e-code { width: 47px; }
.e-costumes { width: 62px; height: 23px; background: #fff; color: #855cd6; border: 0; border-radius: 8px 8px 0 0; }
.e-sounds { width: 52px; }
.find { width: 99px; height: 12px; margin: 0 0 7px 11px; padding-left: 1px; background: #f3f7ff; font-size: 6.500px; font-weight: normal; color: #3a4a6a; line-height: 12px; }
.find span { background: #d5e4fb; }

.editor-row { flex: 1; display: flex; min-height: 0; }
.selector { width: 75px; flex: none; background: linear-gradient(#dbe5f5, #dbe5f5 70%, #e6effc); display: flex; flex-direction: column; align-items: center; padding-top: 3px; padding-bottom: 5px; }
.thumb-wrap { width: 49px; height: 47px; padding: 2px; background: #c5b2ec; border-radius: 7px; }
.thumb { height: 100%; background: #855cd6; border-radius: 5px; overflow: hidden; display: flex; flex-direction: column; padding: 1px; }
.thumb-img { height: 26px; background: #fff; border-radius: 4px 4px 0 0; display: flex; align-items: center; justify-content: center; position: relative; }
.thumb-idx { position: absolute; left: 1px; top: 1px; font-size: 5px; color: #555; }
.thumb-pic { width: 18px; height: 11px; border: 1px solid #888; background: linear-gradient(#fff 2px, #888 2px, #888 3px, #fff 3px); }
.thumb-label { flex: 1; color: #fff; text-align: center; display: flex; flex-direction: column; justify-content: center; font-size: 5px; line-height: 7px; }
.thumb-label small { font-size: 4.500px; font-weight: bold; }
.add-costume { margin-top: auto; width: 27px; height: 27px; border-radius: 50%; background: #855cd6; border: 3px solid #c5b2ec; display: flex; align-items: center; justify-content: center; }
.sel-scroll { width: 10px; flex: none; background: #f1f1f1; display: flex; justify-content: center; padding-top: 4px; }

.paint { width: 385px; flex: none; background: #fff; display: flex; flex-direction: column; font-size: 5px; }
.lbl { font-size: 5px; color: #575e75; white-space: nowrap; font-weight: bold; opacity: .85; flex: none; }
.pill { border: 1px solid #e3e6ee; border-radius: 10px; display: flex; align-items: center; justify-content: center; font-size: 5px; font-weight: bold; color: #575e75; background: #fff; flex: none; }
.p-row1 { height: 36px; flex: none; display: flex; align-items: center; padding: 5px 0 0 7px; }
.p-row2 { height: 33px; flex: none; display: flex; align-items: center; padding: 0 0 5px 7px; border-bottom: 1px dashed #e3e6ee; margin-right: 3px; }
.l-costume { width: 24px; }
.l-fill { width: 11px; }
.l-outline { width: 20px; margin-left: 9px; }
.p-name { width: 71px; height: 17px; justify-content: flex-start; padding-left: 6px; }
.undo { margin-left: 7px; width: 36px; height: 19px; border: 1px solid #e3e6ee; border-radius: 3px; display: flex; flex: none; }
.undo span { flex: 1; display: flex; align-items: center; justify-content: center; }
.undo span + span { border-left: 1px solid #e3e6ee; }
.swatch { width: 27px; height: 17px; border: 1px solid #d8dbe4; border-radius: 3px; display: flex; flex: none; }
.swatch b { width: 8px; border-left: 1px solid #d8dbe4; background: linear-gradient(#575e75, #575e75) center/3px 1px no-repeat; }
.dots { flex: 1; position: relative; }
.dots i { position: absolute; width: 8px; height: 8px; border-radius: 50%; }
.dots i:nth-child(1) { left: 5px; top: 1px; background: #ef7b3f; }
.dots i:nth-child(2) { left: 1px; top: 6px; background: #3f8de8; }
.dots i:nth-child(3) { left: 8px; top: 6px; background: #f7c23a; }
.p-num { width: 36px; height: 17px; margin-left: 4px; }
.ops { display: flex; align-items: flex-start; }
.op { display: flex; flex-direction: column; align-items: center; justify-content: flex-end; gap: 3px; color: #575e75; white-space: nowrap; font-size: 4.500px; font-weight: bold; flex: none; }
.ops1 { margin: 0 0 6px 6px; height: 26px; opacity: .5; }
.ops1 .op { width: 28px; height: 100%; }
.ops1 .op:nth-child(3), .ops1 .op:nth-child(5) { margin-left: 8px; }
.ops2 { margin: 0 0 4px 9px; height: 26px; }
.ops2 .op { height: 100%; }
.ops2 .op:nth-child(1), .ops2 .op:nth-child(2) { width: 27px; }
.ops2 .op:nth-child(3) { width: 27px; margin-left: 11px; }
.ops2 .op:nth-child(4) { width: 40px; margin-left: 10px; }
.ops2 .op:nth-child(5) { width: 40px; }

.p-body { flex: 1; min-height: 0; display: flex; padding: 10px 5px 5px 9px; }
.tools { width: 69px; flex: none; display: grid; grid-template-columns: 22px 40px; grid-auto-rows: 27px; justify-items: center; align-items: center; align-content: start; column-gap: 8px; margin-top: 1px; }
.tool { width: 22px; height: 22px; display: flex; align-items: center; justify-content: center; border-radius: 2px; }
.tool.on { background: #855cd6; }
.canvas-col { flex: 1; display: flex; flex-direction: column; }
.canvas { height: 177px; flex: none; position: relative; overflow: hidden; border: 1px solid #eeeff3; border-top: 0; border-right: 0; }
.t { position: absolute; left: 1px; color: #111; white-space: nowrap; font-family: "Noto Sans", "DejaVu Sans", sans-serif; }
.t1 { top: 1px; font-size: 11.750px; line-height: 14px; }
.t2 { top: 15px; font-size: 11.750px; line-height: 14px; }
.t3 { top: 73px; font-size: 14.300px; line-height: 17px; }
.t4 { top: 104px; font-size: 18.300px; line-height: 26px; }
.bar { position: absolute; left: 245px; top: 0; width: 5px; height: 176px; background: #000; }
.checker { position: absolute; left: 250px; top: 0; right: 0; bottom: 0; background-color: #fff; background-image: linear-gradient(45deg, #f0f3f8 25%, transparent 25%, transparent 75%, #f0f3f8 75%), linear-gradient(45deg, #f0f3f8 25%, transparent 25%, transparent 75%, #f0f3f8 75%); background-size: 8px 8px; background-position: 0 0, 4px 4px; }
.scroll-h { position: absolute; left: 118px; top: 170px; width: 151px; height: 4px; background: #c6c6c6; border-radius: 2px; }
.scroll-v { position: absolute; left: 294px; top: 50px; width: 4px; height: 70px; background: #c6c6c6; border-radius: 2px; }
.canvas-foot { flex: 1; display: flex; align-items: flex-start; padding-top: 3px; }
.convert { width: 73px; height: 20px; background: #855cd6; border-radius: 3px; color: #fff; font-size: 5.800px; font-weight: bold; display: flex; align-items: center; gap: 5px; padding-left: 6px; white-space: nowrap; flex: none; }
.foot-group { height: 18px; display: flex; border: 1px solid #e3e6ee; border-radius: 3px; overflow: hidden; flex: none; }
.fb { flex: 1; display: flex; align-items: center; justify-content: center; }
.fb.on { background: #855cd6; }
.fg-mag { width: 36px; margin-left: 90px; }
.fg-hand { width: 37px; margin-left: 4px; }
.fg-zoom { width: 54px; margin-left: 5px; }

/* right pane */
.right-pane { width: 283px; flex: none; padding: 0 7px 0 7px; display: flex; flex-direction: column; }
.stage-head { height: 26px; flex: none; display: flex; align-items: center; justify-content: space-between; }
.run-ctl { display: flex; align-items: center; margin-left: 22px; gap: 4px; }
.pause { width: 3px; height: 11px; background: #ecb22e; }
.stop { width: 11px; height: 11px; border-radius: 50%; background: #e5555a; margin-left: 3px; }
.layout-btns { display: flex; gap: 0; }
.lb { width: 18px; height: 18px; background: #fff; display: flex; align-items: center; justify-content: center; border-radius: 3px; }
.lb.sel { background: #e9e3f9; }
.lb.full { margin-left: 2px; }
.stage { height: 201px; flex: none; width: 269px; background: linear-gradient(#180006, #4a0000); border-radius: 4px; text-align: center; padding-top: 7px; }
.stage h1 { font-size: 14px; line-height: 18px; color: #7e0c0c; font-family: "Noto Sans", "Liberation Sans", sans-serif; }
.lower { flex: 1; display: flex; gap: 6px; margin-top: 6px; min-height: 0; }
.sprite-col { width: 224px; flex: none; display: flex; flex-direction: column; }
.sprite-info { height: 55px; flex: none; background: #fff; border: 1px solid #e3e6ee; border-bottom: 0; border-radius: 4px 4px 0 0; padding: 7px 6px 0 6px; }
.si-row { display: flex; align-items: center; height: 18px; }
.si-second { height: 19px; margin-top: 4px; }
.si-l1 { width: 18px; }
.si-name { width: 72px; height: 17px; justify-content: flex-start; padding-left: 6px; }
.si-arrow { margin-left: 11px; }
.si-x { margin-left: 6px; }
.si-n1 { width: 27px; height: 17px; margin-left: 4px; }
.si-arrow2 { margin-left: 14px; }
.si-y { margin-left: 7px; }
.si-n2 { width: 27px; height: 17px; margin-left: 5px; }
.show-btns { width: 37px; height: 19px; border: 1px solid #e3e6ee; display: flex; border-radius: 3px; overflow: hidden; flex: none; }
.show-btns span { flex: 1; display: flex; align-items: center; justify-content: center; }
.show-btns .sel { background: #e4dcf8; }
.si-size { margin-left: 24px; }
.si-n3 { width: 36px; height: 18px; margin-left: 4px; }
.si-dir { margin-left: 23px; }
.si-n4 { width: 35px; height: 18px; margin-left: 5px; }
.sprite-list { flex: 1; background: #e6f0ff; position: relative; overflow: hidden; }
.cards { display: flex; gap: 5px; padding-left: 5px; }
.cards i { width: 37px; background: #fff; border: 1px solid #d5dae6; }
.cards-top { height: 5px; }
.cards-top i { height: 5px; border-radius: 0 0 4px 4px; border-top: 0; }
.cards-main { margin-top: 5px; }
.cards-main i { height: 20px; border-radius: 4px 4px 0 0; display: flex; justify-content: center; padding-top: 1px; }
.cards-main i.active { border: 2px solid #855cd6; }
.list-scroll { position: absolute; right: 0; top: 0; bottom: 0; width: 8px; background: #f1f1f1; display: flex; flex-direction: column; align-items: center; padding-top: 3px; gap: 3px; }
.list-scroll b { width: 6px; flex: 1; background: #b8b8b8; }
.add-sprite { position: absolute; right: 8px; bottom: -8px; width: 24px; height: 24px; border-radius: 50%; background: #855cd6; display: flex; align-items: center; justify-content: center; }
.stage-panel { width: 39px; flex: none; background: #fff; border: 1px solid #e3e6ee; border-bottom: 0; border-radius: 4px 4px 0 0; display: flex; flex-direction: column; align-items: center; font-weight: bold; overflow: hidden; }
.sp-title { font-size: 5px; margin-top: 9px; line-height: 7px; flex: none; }
.sp-thumb { width: 35px; height: 26px; background: linear-gradient(#180006, #4a0000); border-radius: 2px; margin-top: 7px; flex: none; }
.sp-label { font-size: 5px; margin-top: 6px; line-height: 7px; flex: none; }
.sp-add { width: 28px; height: 28px; border-radius: 50%; background: #855cd6; border: 3px solid #c5b2ec; margin-top: 4px; display: flex; justify-content: center; padding-top: 7px; flex: none; }
.page-scroll { width: 7px; flex: 1; background: #f1f1f1; display: flex; flex-direction: column; align-items: center; padding: 5px 0 3px; gap: 3px; }
.page-scroll b { width: 7px; height: 263px; background: #c1c1c1; }
.page-scroll .dn { margin-top: auto; }

.alert { position: absolute; left: 271px; top: 3px; width: 232px; height: 36px; background: #ffefdf; border: 1px solid #ffa04d; border-radius: 5px; display: flex; align-items: center; padding-left: 9px; box-shadow: 0 0 2px rgba(255,140,26,.5); }
.alert-msg { font-size: 6px; font-weight: bold; color: #575e75; white-space: nowrap; width: 70px; }
.alert-btn { height: 18px; background: #ff8c1a; border-radius: 3px; color: #fff3e2; font-size: 6px; font-weight: bold; text-align: center; line-height: 18px; }
.a1 { width: 58px; }
.a2 { width: 59px; margin-left: 7px; }

/* taskbar */
.taskbar { height: 26px; flex: 1; background: #12323f; display: flex; align-items: center; padding-left: 11px; color: #fff; }
.taskbar > * { flex: none; }
.weather { width: 30px; display: flex; position: relative; align-items: center; }
.weather span { font-size: 5.500px; position: absolute; left: 7px; top: -2px; }
.winlogo { margin-left: 64px; }
.search { width: 122px; height: 17px; margin-left: 7px; background: #eef1f2; border-radius: 9px; display: flex; align-items: center; padding: 0 3px 0 6px; gap: 5px; color: #666; font-size: 7.500px; }
.search-art { margin-left: auto; }
.apps { display: flex; margin-left: 1.750px; }
.app { width: 24.500px; height: 26px; display: flex; align-items: center; justify-content: center; position: relative; flex: none; }
.app.cur { background: rgba(255,255,255,.07); }
.app.dot::after, .app.cur::after { content: ""; position: absolute; bottom: 1px; left: 10px; width: 4px; height: 1px; background: #9ab; }
.app-p { font-size: 7px; font-weight: bold; fill: #fff; font-family: "Liberation Sans", Arial, sans-serif; }
.tray { margin-left: 39px; display: flex; align-items: center; }
.tray > :nth-child(2) { margin-left: 9px; }
.tray > :nth-child(3) { margin-left: 8px; }
.tray > :nth-child(4) { margin-left: 5px; }
.tray > :nth-child(5) { margin-left: 5px; }
.clock { display: flex; flex-direction: column; align-items: flex-end; width: 37px; font-size: 6.500px; line-height: 9px; margin-left: 2px; color: #e8eef0; white-space: nowrap; }
.tray > :nth-child(7) { margin-left: 4px; }
.tray > :nth-child(8) { margin-left: 11px; }
```
